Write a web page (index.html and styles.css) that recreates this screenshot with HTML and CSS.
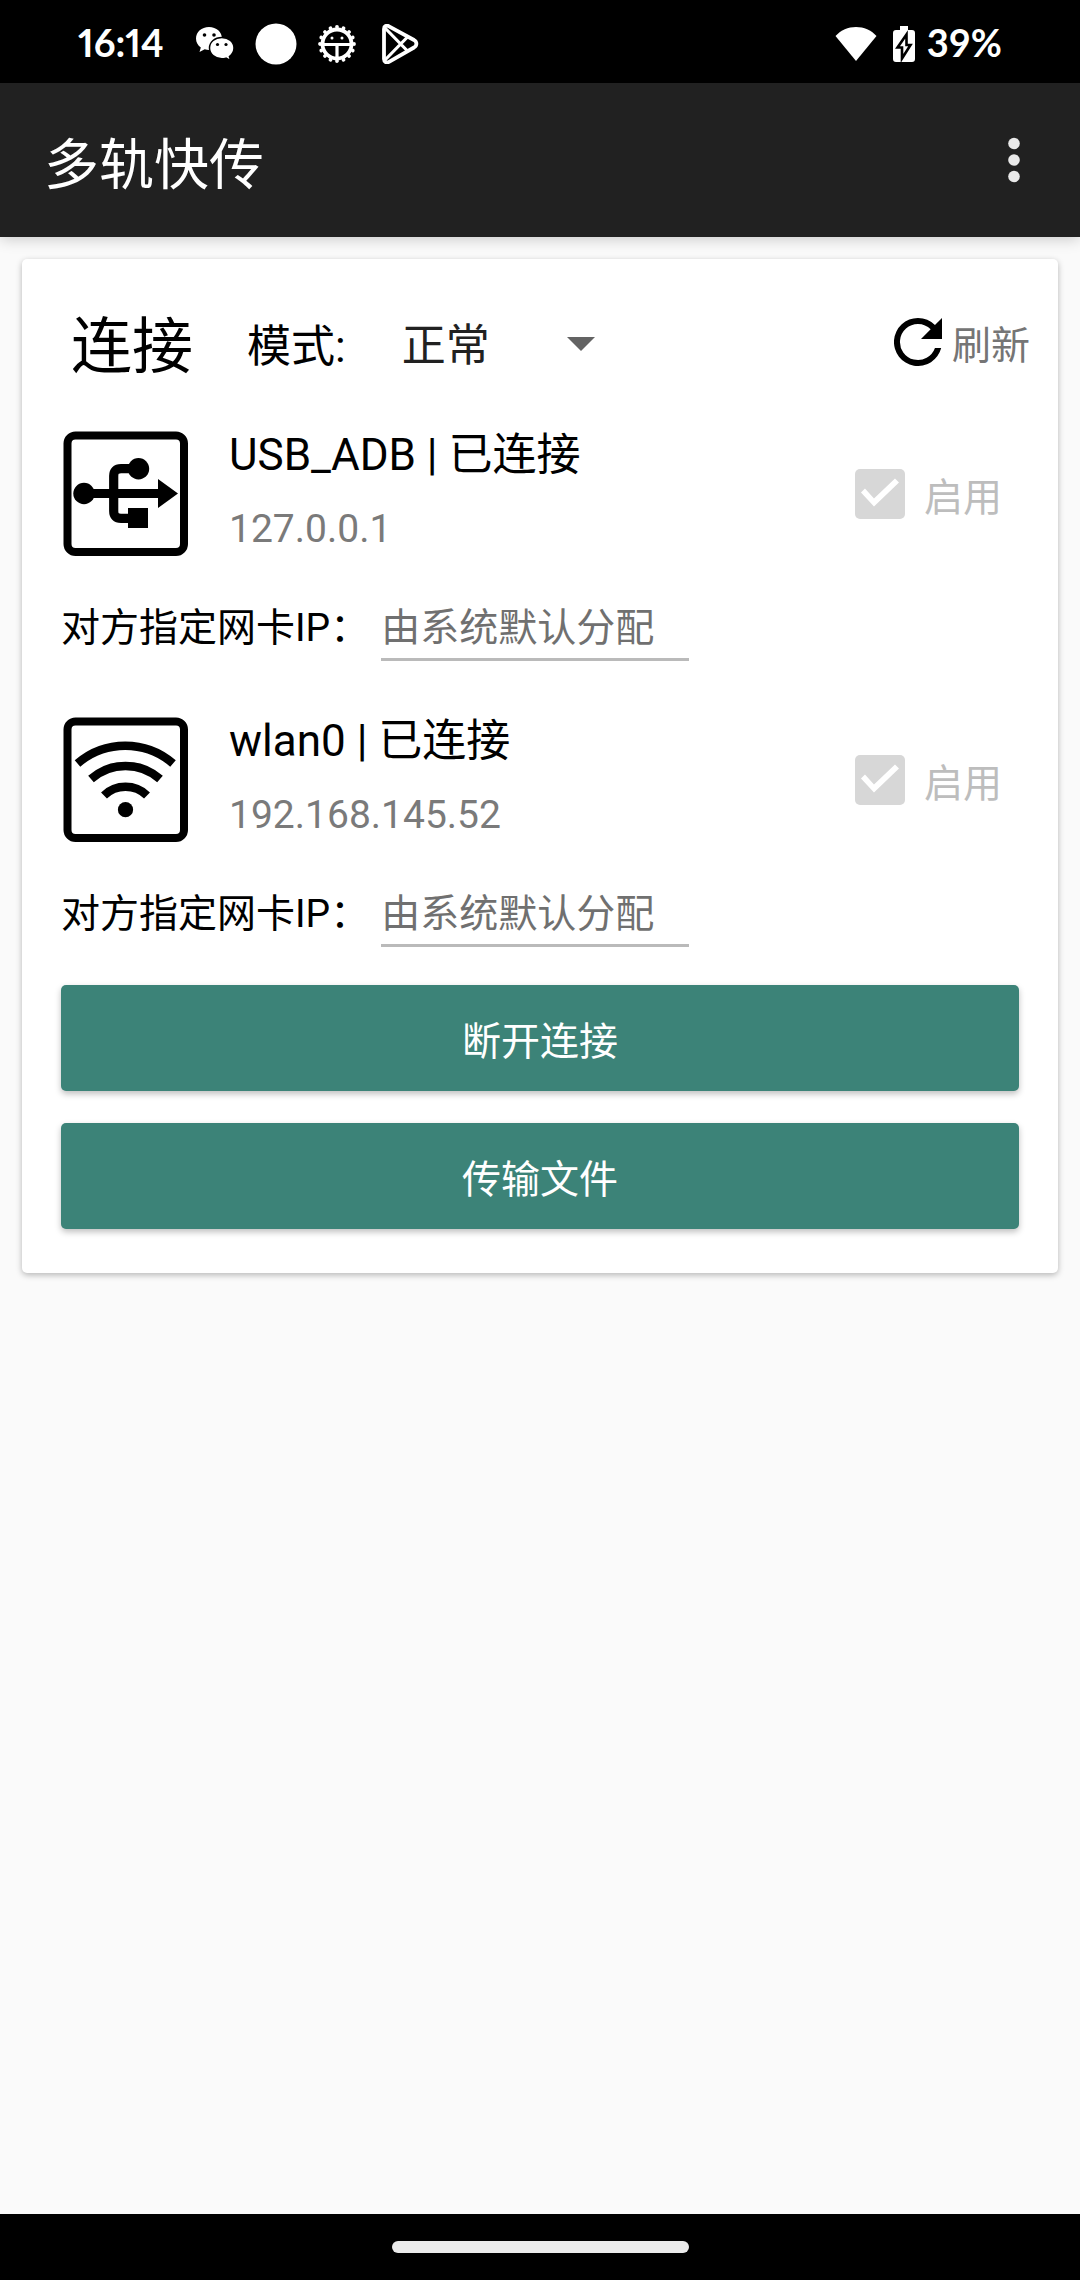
FILE: index.html
```html
<!DOCTYPE html>
<html lang="zh-CN">
<head>
  <meta charset="utf-8">
  <meta name="viewport" content="width=device-width, initial-scale=1">
  <title>多轨快传</title>
  <link rel="stylesheet" href="styles.css">
</head>
<body>
  <div class="status-bar">
    <span class="status-text clock">16:14</span>
    <div class="status-icons">
      <svg width="40" height="36" viewBox="0 0 40 36" aria-hidden="true">
        <path fill="#fff" d="M14 1C6.500 1 1 6 1 12.500c0 3.800 1.800 6.800 4.800 9L4.500 26l5.200-2.700c1.500.4 2.800.6 4.300.6C21.500 23.900 27 19 27 12.500S21.500 1 14 1z"/>
        <path fill="#fff" stroke="#000" stroke-width="1.500" d="M26.800 11.500c-7 0-12.300 4.500-12.300 10.500s5.300 10.700 12.300 10.700c1.500 0 2.800-.2 4.200-.6l4.600 2.500-1.200-4.100c2.800-2 4.600-5 4.600-8.500 0-6-5.300-10.500-12.200-10.500z"/>
        <g fill="#000"><circle cx="9.500" cy="9" r="1.800"/><circle cx="19" cy="9" r="1.800"/><circle cx="22.500" cy="18.500" r="1.600"/><circle cx="31" cy="18.500" r="1.600"/></g>
      </svg>
      <svg width="42" height="42" viewBox="0 0 42 42" aria-hidden="true"><circle cx="21" cy="21" r="20.500" fill="#fff"/></svg>
      <svg width="40" height="40" viewBox="0 0 40 40" aria-hidden="true">
        <circle cx="20" cy="20" r="17" fill="none" stroke="#fff" stroke-width="3.800" stroke-linecap="round" pathLength="160" stroke-dasharray="0.01 9.99"/>
        <circle cx="20" cy="20" r="14.500" fill="none" stroke="#fff" stroke-width="3.800"/>
        <path d="M6 20.500h28M20 20.500v14" stroke="#fff" stroke-width="3.200"/>
        <circle cx="15" cy="14" r="1.500" fill="#fff"/><circle cx="25" cy="14" r="1.500" fill="#fff"/>
      </svg>
      <svg width="46" height="40" viewBox="-4 0 46 40" aria-hidden="true">
        <g fill="none" stroke="#fff" stroke-width="3.800" stroke-linejoin="round">
          <path d="M3 5v30c0 3 2.500 4.200 5 2.800l25-14.300c3.200-2 3.200-5.500 0-7.500L8 2.300C5.500.9 3 2 3 5z"/>
          <path d="M4 4l22.500 23M4 36l22.500-23" stroke-width="3.200"/>
        </g>
      </svg>
    </div>
    <div class="status-right">
      <svg width="42" height="36" viewBox="0 0 42 36" aria-hidden="true"><path fill="#fff" d="M21 35L.5 10C6 4 13 1 21 1s15 3 20.500 9z"/></svg>
      <svg class="battery" width="22" height="36" viewBox="0 0 22 36" aria-hidden="true">
        <path fill="#fff" d="M7 0h8v4h4a3 3 0 0 1 3 3v26a3 3 0 0 1-3 3H3a3 3 0 0 1-3-3V7a3 3 0 0 1 3-3h4z"/>
        <path fill="#fff" stroke="#000" stroke-width="2.600" d="M13.500 8.500L4.500 21.500h4.500v11l8.500-13.500h-4z"/>
      </svg>
      <span class="status-text">39%</span>
    </div>
  </div>

  <header class="app-bar">
    <h1 class="app-title">多轨快传</h1>
    <button class="more" type="button" aria-label="更多选项">
      <svg width="12" height="46" viewBox="0 0 12 46" fill="#e9e9e9"><circle cx="6" cy="6.500" r="5.800"/><circle cx="6" cy="23" r="5.800"/><circle cx="6" cy="39.500" r="5.800"/></svg>
    </button>
  </header>

  <main class="content">
    <section class="card">
      <div class="card-header">
        <h2 class="card-title">连接</h2>
        <label class="mode-label" for="mode">模式:</label>
        <div class="mode">
          <select class="mode-select" id="mode"><option>正常</option></select>
          <svg class="mode-arrow" width="28" height="14" viewBox="0 0 28 14" aria-hidden="true"><path fill="#636363" d="M0 0h28L14 14z"/></svg>
        </div>
        <button class="refresh" type="button">
          <svg width="48" height="48" viewBox="4 4 16 16" aria-hidden="true"><path d="M17.650 6.350A7.960 7.960 0 0 0 12 4a8 8 0 1 0 7.730 10h-2.080A6 6 0 1 1 12 6c1.660 0 3.140.69 4.220 1.780L13 11h7V4z"/></svg>
          刷新
        </button>
      </div>

      <div class="device">
        <div class="device-main">
          <svg width="126" height="126" viewBox="0 0 126 126" aria-hidden="true">
            <rect x="4.500" y="4.500" width="116.500" height="116.500" rx="8" fill="none" stroke="#000" stroke-width="8"/>
            <path d="M21 62.500h76M76 37.700H58q-7.300 0-7.300 7.300v35q0 7.300 7.300 7.300h12" fill="none" stroke="#000" stroke-width="9.200"/>
            <circle cx="21" cy="62.500" r="10.700"/><circle cx="75.500" cy="37.700" r="10.700"/>
            <path d="M65 77h20v20H65zM95 48l20 14.500L95 77z"/>
          </svg>
          <div class="device-text">
            <div class="device-name">USB_ADB | 已连接</div>
            <div class="device-ip">127.0.0.1</div>
          </div>
          <label class="enable"><input class="enable-box" type="checkbox" checked disabled>启用</label>
        </div>
        <div class="peer">
          <label for="peer-usb">对方指定网卡IP：</label>
          <input class="peer-input" id="peer-usb" type="text" placeholder="由系统默认分配">
        </div>
      </div>

      <div class="device">
        <div class="device-main">
          <svg width="126" height="126" viewBox="0 0 126 126" aria-hidden="true">
            <rect x="4.500" y="4.500" width="116.500" height="116.500" rx="8" fill="none" stroke="#000" stroke-width="8"/>
            <path d="M14.500 46.500a73 73 0 0 1 95.500 0M28 62a52 52 0 0 1 69 0M41 78.500a31 31 0 0 1 43 0" fill="none" stroke="#000" stroke-width="8.500"/>
            <circle cx="62.500" cy="92.700" r="7.600"/>
          </svg>
          <div class="device-text">
            <div class="device-name">wlan0 | 已连接</div>
            <div class="device-ip">192.168.145.52</div>
          </div>
          <label class="enable"><input class="enable-box" type="checkbox" checked disabled>启用</label>
        </div>
        <div class="peer">
          <label for="peer-wlan">对方指定网卡IP：</label>
          <input class="peer-input" id="peer-wlan" type="text" placeholder="由系统默认分配">
        </div>
      </div>

      <div class="actions">
        <button class="action" type="button">断开连接</button>
        <button class="action" type="button">传输文件</button>
      </div>
    </section>
  </main>

  <div class="nav-bar"><div class="nav-handle"></div></div>
</body>
</html>
```
FILE: styles.css
```css
* {
  box-sizing: border-box;
}

body {
  margin: 0;
  min-height: 100vh;
  display: flex;
  flex-direction: column;
  background: #fafafa;
  color: #000;
  font-family: Roboto, "Noto Sans CJK SC", sans-serif;
  font-size: 39px;
}

svg {
  display: block;
  flex: none;
}

button,
input,
select {
  margin: 0;
  padding: 0;
  border: 0;
  background: none;
  color: inherit;
  font: inherit;
}

/* System status bar */
.status-bar {
  display: flex;
  align-items: center;
  height: 83px;
  padding: 4px 78px 0;
  background: #000;
  color: #fff;
}

.status-text {
  font-family: Lato, sans-serif;
  font-size: 38px;
  font-weight: 700;
  line-height: 44px;
  padding-bottom: 4px;
}

.clock {
  width: 87px;
  font-variant-numeric: proportional-nums;
}

.status-icons {
  display: flex;
  align-items: center;
  gap: 20px;
  margin-left: 30px;
}

.status-right {
  display: flex;
  align-items: center;
  gap: 16px;
  margin-left: auto;
}

.battery {
  margin-right: -4px;
}

/* App bar */
.app-bar {
  position: relative;
  display: flex;
  align-items: center;
  justify-content: space-between;
  height: 154px;
  padding: 0 60px 0 44px;
  background: #212121;
  color: #fff;
  box-shadow: 0 2px 14px rgba(0, 0, 0, 0.2);
}

.app-title {
  margin: 0;
  padding-top: 10px;
  font-size: 55px;
  font-weight: 400;
  line-height: 64px;
}

/* Connection card */
.content {
  flex: 1;
  padding: 22px;
}

.card {
  padding: 0 39px 44px;
  border-radius: 5px;
  background: #fff;
  box-shadow: 0 2px 6px rgba(0, 0, 0, 0.28);
}

.card-header {
  display: flex;
  align-items: center;
  height: 172px;
  margin-right: -11px;
  padding-left: 10px;
}

.card-title {
  margin: 0 54px 0 0;
  padding-top: 4px;
  font-size: 61px;
  font-weight: 400;
  line-height: 72px;
}

.mode-label {
  margin-right: 56px;
  padding-bottom: 4px;
  font-size: 44px;
}

.mode {
  position: relative;
  width: 200px;
}

.mode-select {
  appearance: none;
  width: 100%;
  padding-top: 2px;
  color: #212121;
  font-size: 44px;
}

.mode-arrow {
  position: absolute;
  top: 50%;
  right: 7px;
  margin-top: -8px;
  pointer-events: none;
}

.refresh {
  display: flex;
  align-items: center;
  gap: 10px;
  margin-left: auto;
  padding-bottom: 6px;
  color: #757575;
}

.device {
  padding-bottom: 56px;
}

.device-main {
  display: flex;
  align-items: center;
  height: 125px;
  padding: 0 17px 0 2px;
}

.device-text {
  display: grid;
  gap: 26px;
  margin-left: 40px;
  padding-bottom: 4px;
}

.device-name {
  font-size: 44px;
  line-height: 48px;
}

.device-ip {
  color: #7a7a7a;
  line-height: 48px;
}

.enable {
  display: flex;
  align-items: center;
  gap: 19px;
  margin-left: auto;
  color: #bdbdbd;
}

.enable-box {
  appearance: none;
  width: 50px;
  height: 50px;
  border-radius: 5px;
  background: #d7d7d7;
}

.enable-box:checked::before {
  content: "";
  display: block;
  height: 100%;
  background: #fff;
  clip-path: polygon(6px 24px, 10px 20px, 19px 30px, 40px 10px, 44px 14px, 19px 38px);
}

.peer {
  display: flex;
  align-items: center;
  gap: 12px;
  margin-top: 31px;
  height: 74px;
}

.peer-input {
  width: 308px;
  height: 74px;
  padding: 10px 0 0;
  border-bottom: 3px solid #bababa;
}

.peer-input::placeholder {
  color: #707070;
  opacity: 1;
}

.actions {
  display: grid;
  gap: 32px;
  margin-top: -18px;
}

.action {
  height: 106px;
  border-radius: 5px;
  background: #3c8378;
  color: #fff;
  box-shadow: 0 3px 6px rgba(0, 0, 0, 0.25);
}

/* Gesture navigation */
.nav-bar {
  display: flex;
  align-items: center;
  justify-content: center;
  height: 66px;
  background: #000;
}

.nav-handle {
  width: 297px;
  height: 12px;
  border-radius: 6px;
  background: #ebebeb;
}
```
